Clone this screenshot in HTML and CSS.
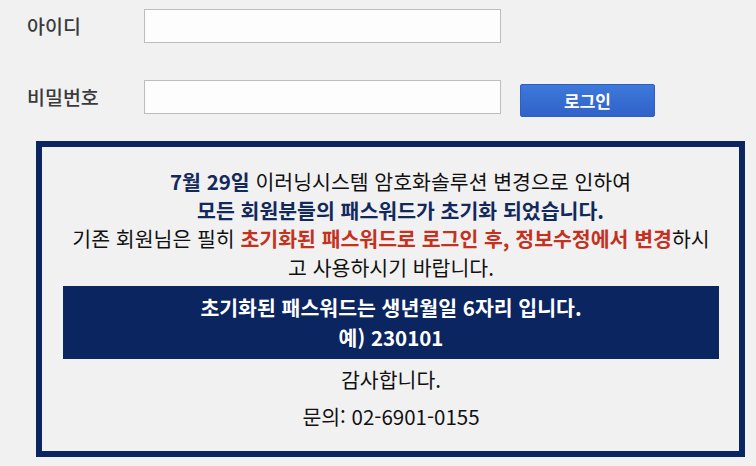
FILE: index.html
```html
<!DOCTYPE html>
<html lang="ko">
<head>
    <meta charset="UTF-8">
    <meta name="viewport" content="width=device-width, initial-scale=1.0">
    <title>로그인</title>
    <link rel="stylesheet" href="styles.css">
</head>
<body>

    <!-- 로그인 폼 -->
    <div class="login-form">
        <div class="form-row">
            <label for="userid">아이디</label>
            <input type="text" id="userid" />
        </div>
        <div class="form-row">
            <label for="userpw">비밀번호</label>
            <input type="password" id="userpw" />
            <button class="login-btn">로그인</button>
        </div>
    </div>

    <!-- 공지 박스 -->
    <div class="notice">
        <p class="notice-line indent"><strong class="navy">7월 29일</strong> 이러닝시스템 암호화솔루션 변경으로 인하여</p>
        <p class="notice-line indent"><strong class="navy">모든 회원분들의 패스워드가 초기화 되었습니다.</strong></p>
        <p class="notice-line">기존 회원님은 필히 <strong class="red">초기화된 패스워드로 로그인 후, 정보수정에서 변경</strong>하시</p>
        <p class="notice-line">고 사용하시기 바랍니다.</p>

        <div class="notice-highlight">
            <p>초기화된 패스워드는 생년월일 6자리 입니다.</p>
            <p>예) 230101</p>
        </div>

        <p class="notice-thanks">감사합니다.</p>
        <p class="notice-contact">문의: 02-6901-0155</p>
    </div>

</body>
</html>
```

FILE: styles.css
```css
body {
    margin: 0;
    padding: 0;
    background: #f1f1f1;
    font-family: "Noto Sans CJK KR", "Noto Sans", sans-serif;
    color: #111;
}

p {
    margin: 0;
}

.login-form {
    padding: 9px 0 0 27px;
}

.form-row {
    display: flex;
    align-items: flex-start;
    margin-bottom: 37px;
}

.form-row:last-child {
    margin-bottom: 0;
}

.form-row label {
    width: 117px;
    font-size: 19.5px;
    font-weight: 500;
    line-height: 34px;
    color: #3a3a3a;
}

.form-row input {
    width: 357px;
    height: 34px;
    box-sizing: border-box;
    border: 1px solid #bdbdbd;
    background: #fdfdfd;
    margin: 0;
    padding: 4px 6px;
}

.login-btn {
    margin: 4px 0 0 19px;
    width: 135px;
    height: 33px;
    box-sizing: border-box;
    border: 1px solid #2d5fc2;
    border-radius: 2px;
    background: linear-gradient(#3d79da, #3062c9);
    color: #fff;
    font-family: inherit;
    font-size: 17px;
    font-weight: 700;
    padding: 0;
    cursor: pointer;
}

.notice {
    margin: 24px 0 0 36px;
    width: 709px;
    box-sizing: border-box;
    border: 6px solid #0a2560;
    padding: 20px 20px 21px 21px;
    text-align: center;
}

.notice-line {
    font-size: 20.5px;
    line-height: 28.5px;
    white-space: nowrap;
}

.notice-line.indent {
    padding-left: 19px;
}

.navy {
    color: #13295c;
}

.red {
    color: #c4321f;
}

.notice-highlight {
    margin-top: 5px;
    padding: 6px 0 7px;
    background: #0a2560;
    color: #fff;
    font-size: 20.5px;
    font-weight: 700;
    line-height: 30px;
}

.notice-thanks {
    margin-top: 6px;
    font-size: 20.5px;
    line-height: 28px;
}

.notice-contact {
    margin-top: 9px;
    font-size: 20.5px;
    line-height: 28px;
}
```
